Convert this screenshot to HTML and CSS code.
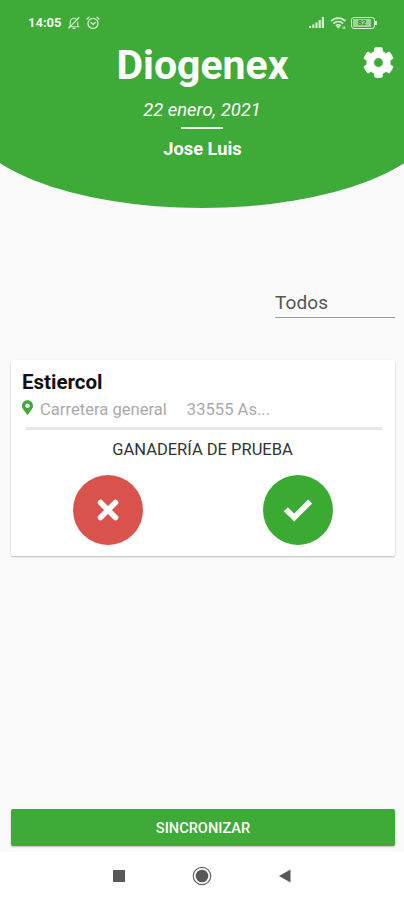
FILE: index.html
```
<!DOCTYPE html>
<html lang="es">
<head>
<meta charset="utf-8">
<meta name="viewport" content="width=device-width, initial-scale=1">
<title>Diogenex</title>
<link rel="stylesheet" href="styles.css">
</head>
<body>
<div class="screen">
  <header class="hero">
    <div class="status">
      <span class="clock">14:05</span>
      <svg class="mute" width="14" height="14" viewBox="0 0 14 14" fill="none" stroke="currentColor" stroke-width="1.1" stroke-linecap="round"><path d="M3.2 10.2V6C3.2 3.8 5 2.2 7 2.2c1.4 0 2.6.7 3.3 1.8M10.8 6.2v4M2 10.8h10M6 12.4h2M12 1.5 1.8 12.2"/></svg>
      <svg class="alarm" width="14" height="14" viewBox="0 0 14 14" fill="none" stroke="currentColor" stroke-width="1.3" stroke-linecap="round"><circle cx="7" cy="7.4" r="5"/><path d="M1 3 3 1.2M13 3l-2-1.8M4.9 6.6 7 8.4l2.3-1.8"/></svg>
      <svg class="signal" width="16" height="13" viewBox="0 0 16 13" fill="currentColor"><path d="M0 10h2.200v2H0zM3.200 8.500h2.200V12H3.200zM6.400 6.500h2.200V12H6.400zM9.600 4h2.200v8H9.600zM12.800 1H15v11h-2.200z"/></svg>
      <svg class="wifi" width="17" height="14" viewBox="0 0 17 14" fill="none" stroke="currentColor" stroke-width="1.7"><path d="M1 5.200c4-4.200 10.500-4.200 14.500 0M3.400 7.600c2.800-2.800 7-2.800 9.700 0M5.800 9.800c1.400-1.400 3.500-1.400 4.900 0"/><path d="M7 10.600h2.600L8.300 12.200zM13 10.500v2.500M14.800 10.500v2.500" stroke-width="1"/></svg>
      <span class="battery"><span class="level">82</span></span>
    </div>
    <h1 class="brand">Diogenex</h1>
    <p class="date">22 enero, 2021</p>
    <div class="rule"></div>
    <p class="user">Jose Luis</p>
    <svg class="gear" viewBox="0 0 512 512" fill="currentColor"><path fill-rule="evenodd" stroke="currentColor" stroke-width="14" stroke-linejoin="round" d="M487.400 315.700l-42.600-24.600c4.300-23.200 4.300-47 0-70.200l42.600-24.600c4.900-2.800 7.100-8.600 5.500-14-11.100-35.600-30-67.800-54.700-94.600-3.800-4.100-10-5.100-14.800-2.300L380.800 110c-17.900-15.400-38.500-27.300-60.800-35.100V25.800c0-5.600-3.900-10.500-9.400-11.700-36.700-8.200-74.300-7.800-109.200 0-5.500 1.200-9.400 6.100-9.400 11.700V75c-22.200 7.900-42.800 19.800-60.800 35.100L88.700 85.500c-4.900-2.800-11-1.900-14.800 2.300-24.700 26.700-43.600 58.900-54.700 94.600-1.700 5.400.6 11.200 5.500 14L67.300 221c-4.300 23.200-4.300 47 0 70.200l-42.600 24.600c-4.900 2.800-7.100 8.600-5.500 14 11.100 35.600 30 67.800 54.700 94.600 3.800 4.100 10 5.100 14.800 2.300l42.600-24.600c17.900 15.400 38.500 27.300 60.800 35.100v49.200c0 5.600 3.900 10.500 9.400 11.700 36.700 8.200 74.300 7.800 109.200 0 5.500-1.200 9.400-6.100 9.400-11.700v-49.200c22.200-7.900 42.800-19.800 60.800-35.100l42.600 24.600c4.900 2.800 11 1.900 14.800-2.300 24.700-26.700 43.600-58.900 54.700-94.600 1.500-5.500-.7-11.300-5.600-14.100zM256 336c-44.100 0-80-35.900-80-80s35.900-80 80-80 80 35.900 80 80-35.900 80-80 80z"/></svg>
  </header>

  <main class="content">
    <div class="filter">Todos</div>
    <article class="card">
      <h2 class="title">Estiercol</h2>
      <div class="place">
        <svg class="pin" viewBox="0 0 384 512" fill="currentColor"><path d="M172.300 501.700C27 291 0 269.400 0 192 0 86 86 0 192 0s192 86 192 192c0 77.400-27 99-172.300 309.700-9.500 13.800-29.900 13.800-39.400 0zM192 272c44.200 0 80-35.800 80-80s-35.800-80-80-80-80 35.800-80 80 35.800 80 80 80z"/></svg>
        <span class="street">Carretera general</span>
        <span class="zip">33555 As...</span>
      </div>
      <div class="divider"></div>
      <p class="farm">GANADERÍA DE PRUEBA</p>
      <div class="actions">
        <button class="round reject" aria-label="Rechazar"><svg width="22" height="22" viewBox="0 0 22 22" fill="none" stroke="currentColor" stroke-width="5.600" stroke-linecap="round"><path d="M3.500 3.500l15 15M18.500 3.500l-15 15"/></svg></button>
        <button class="round accept" aria-label="Aceptar"><svg width="30" height="24" viewBox="0 0 30 24" fill="none" stroke="currentColor" stroke-width="5.600" stroke-linejoin="miter"><path d="M2.800 11.200l8.400 8.300L27.200 3.500"/></svg></button>
      </div>
    </article>
    <button class="sync">SINCRONIZAR</button>
  </main>

  <nav class="nav">
    <svg width="14" height="14" viewBox="0 0 14 14"><path d="M1 1h12v12H1z" fill="#585858"/></svg>
    <svg width="20" height="20" viewBox="0 0 20 20"><circle cx="10" cy="10" r="8.700" fill="none" stroke="#666" stroke-width="1.200"/><circle cx="10" cy="10" r="6.300" fill="#585858"/></svg>
    <svg width="14" height="14" viewBox="0 0 14 14"><path d="M12.500 .500v13L1 7z" fill="#585858"/></svg>
  </nav>
</div>
</body>
</html>
```
FILE: styles.css
```
* { box-sizing: border-box; }
body { margin: 0; font-family: Roboto, sans-serif; background: #fafafa; }
h1, h2, p { margin: 0; white-space: nowrap; }
button { border: 0; padding: 0; font-family: inherit; color: #fff; }
svg { display: block; flex: none; }

.screen { width: 404px; height: 900px; display: flex; flex-direction: column; overflow: hidden; }

.hero {
  position: relative; z-index: 0; height: 208px; flex: none;
  display: flex; flex-direction: column; align-items: center; color: #fff;
}
.hero::before {
  content: ""; position: absolute; z-index: -1; left: -36px; right: -36px; top: -40px; bottom: 0;
  background: #3eaa37; border-radius: 0 0 50% 50% / 0 0 95px 95px;
}
.status {
  align-self: stretch; height: 45px; padding: 0 29px 0 28px;
  display: flex; align-items: center; color: #d8f0d5;
}
.clock { width: 39px; font-size: 13px; font-weight: 700; letter-spacing: 0; color: #edf9eb; }
.alarm { margin-left: 5px; }
.signal { margin-left: auto; }
.wifi { margin-left: 5px; }
.battery {
  position: relative; margin-left: 4px; width: 24px; height: 12px; padding: 1px;
  border: 1px solid; border-radius: 3px;
}
.battery::after { content: ""; position: absolute; right: -3px; top: 3px; width: 2px; height: 4px; background: currentColor; }
.level {
  display: block; height: 8px; width: 18px; background: #9fd59b; color: #3b8b36;
  font-size: 8px; font-weight: 700; line-height: 8px; text-align: center;
}
.brand { height: 50px; padding-left: 1px; font-size: 41px; line-height: 40px; font-weight: 700; }
.date { height: 32px; font-size: 18.4px; line-height: 30px; font-style: italic; }
.rule { width: 42px; height: 2px; background: #e8f7e6; }
.user { margin-top: 9px; padding-left: 1px; font-size: 18.3px; line-height: 22px; font-weight: 700; }
.gear { position: absolute; left: 363px; top: 47px; width: 31px; height: 31px; }

.content { flex: 1; padding: 79px 9px 6px 11px; display: flex; flex-direction: column; }
.filter {
  align-self: flex-end; width: 120px; height: 31px; border-bottom: 1px solid #999;
  font-size: 19px; line-height: 32px; color: #555; letter-spacing: 0.1px;
}
.card {
  margin-top: 42px; height: 196px; padding: 10px 12px 0 11px; background: #fff;
  border-radius: 2px; box-shadow: 0 1px 2px rgba(0, 0, 0, 0.25);
}
.title { font-size: 20.500px; line-height: 24px; color: #111; }
.place { margin-top: 3px; height: 24px; display: flex; align-items: center; font-size: 16.600px; color: #aaa; white-space: pre; }
.pin { width: 11px; height: 15px; margin-top: -3px; color: #3eaa37; }
.street { margin-left: 7px; }
.zip { margin-left: 20px; }
.divider { margin: 6px 0 0 3px; height: 3px; background: #e8e8e8; border-radius: 2px; }
.farm { margin-top: 9px; font-size: 16.500px; line-height: 22px; text-align: center; color: #333; }
.actions { margin-top: 14px; display: flex; justify-content: space-between; padding: 0 50px 0 51px; }
.round { width: 70px; height: 70px; border-radius: 50%; display: flex; align-items: center; justify-content: center; }
.reject { background: #da524c; }
.accept { background: #3aaa32; }
.sync {
  margin-top: auto; height: 37px; border-radius: 2px; background: #3eaa37;
  font-size: 14.600px; font-weight: 500; box-shadow: 0 1px 2px rgba(0, 0, 0, 0.25);
}
.nav { height: 48px; flex: none; background: #fff; display: flex; align-items: center; justify-content: center; gap: 66px; }
```
